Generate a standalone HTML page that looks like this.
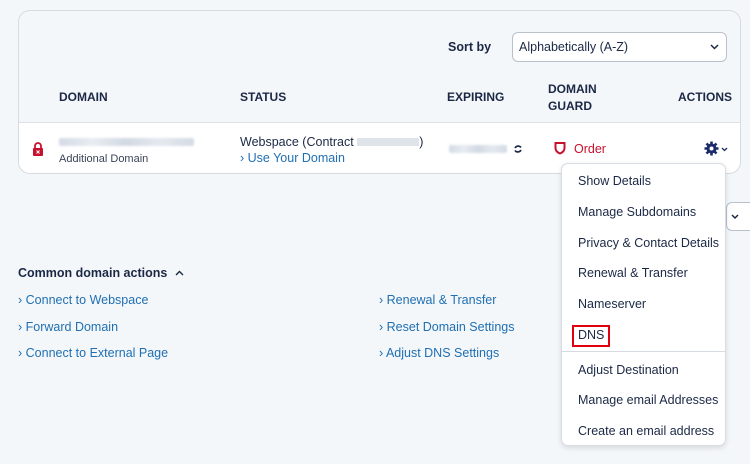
<!DOCTYPE html>
<html><head><style>
*{margin:0;padding:0;box-sizing:border-box}
body{width:750px;height:464px;background:#f4f7fa;font-family:"Liberation Sans",sans-serif;color:#1b2845;font-size:12.5px;position:relative;overflow:hidden}
.a{position:absolute;white-space:nowrap}
.card{position:absolute;left:18px;top:10px;width:723px;height:164px;border:1px solid #d6dbe2;border-radius:12px;background:#f4f7fa;overflow:hidden}
.row{position:absolute;left:0;top:111px;width:723px;height:53px;background:#fff;border-top:1px solid #dde2e8}
.h{font-weight:bold;font-size:12px}
.blue{color:#1f6fb2}
.blur{background:linear-gradient(90deg,#c9d2de,#e3e8ef,#c7d0dc,#dfe4ec,#c9d2de);height:8px;border-radius:2px;opacity:.8;filter:blur(1px)}
.menu{position:absolute;left:561px;top:163px;width:165px;height:283px;background:#fff;border:1px solid #d8dde4;border-radius:7px;box-shadow:0 2px 6px rgba(0,0,0,.12)}
.mi{position:absolute;left:16px;font-size:12.5px}
</style></head><body>
<div class="card">
  <div class="a" style="left:429px;top:29px;font-weight:bold;font-size:12.5px">Sort by</div>
  <div class="a" style="left:493px;top:21px;width:215px;height:30px;border:1px solid #b9c1cc;border-radius:6px;background:#fff;padding:7px 6px;font-size:12.5px">Alphabetically (A-Z)
    <svg style="position:absolute;right:7px;top:11px" width="9" height="6" viewBox="0 0 9 6"><path d="M1 1l3.5 3.5L8 1" stroke="#1b2845" stroke-width="1.5" fill="none"/></svg></div>
  <div class="a h" style="left:40px;top:79px">DOMAIN</div>
  <div class="a h" style="left:221px;top:79px">STATUS</div>
  <div class="a h" style="left:428px;top:79px">EXPIRING</div>
  <div class="a h" style="left:529px;top:70px;line-height:17px">DOMAIN<br>GUARD</div>
  <div class="a h" style="left:659px;top:79px">ACTIONS</div>
  <div class="row">
    <svg class="a" style="left:13px;top:19px" width="12" height="14" viewBox="0 0 12 14"><path d="M3 6V4a3 3 0 016 0v2" stroke="#c8102e" stroke-width="1.8" fill="none"/><rect x="1" y="6" width="10" height="8" rx="1" fill="#c8102e"/><path d="M4.5 8.5l3 3M7.5 8.5l-3 3" stroke="#fff" stroke-width="1"/></svg>
    <div class="a blur" style="left:40px;top:15px;width:135px"></div>
    <div class="a" style="left:40px;top:30px;font-size:11px;color:#3a4457">Additional Domain</div>
    <div class="a" style="left:221px;top:12px">Webspace (Contract <span style="display:inline-block;width:62px;height:8px;background:#dfe4eb"></span>)</div>
    <div class="a blue" style="left:221px;top:28px">› Use Your Domain</div>
    <div class="a blur" style="left:430px;top:22px;width:58px"></div>
    <svg class="a" style="left:494px;top:21px" width="10" height="10" viewBox="0 0 10 10"><path d="M8 3.5A3.5 3.5 0 002 4M2 6.5A3.5 3.5 0 008 6" stroke="#1b2845" stroke-width="1.6" fill="none"/></svg>
    <svg class="a" style="left:535px;top:18px" width="12" height="14" viewBox="0 0 12 14"><path d="M1.5 2h9v5c0 3-2 4.5-4.5 5.5C3.5 11.5 1.5 10 1.5 7z" stroke="#c8102e" stroke-width="2" fill="none"/></svg>
    <div class="a" style="left:555px;top:19px;color:#c8102e">Order</div>
    <svg class="a" style="left:685px;top:18px" width="15" height="15" viewBox="0 0 15 15"><circle cx="7.5" cy="7.5" r="5" fill="#1b2a6b"/><g stroke="#1b2a6b" stroke-width="2.6"><path d="M7.5 0.5v14M0.5 7.5h14M2.5 2.5l10 10M12.5 2.5l-10 10"/></g><circle cx="7.5" cy="7.5" r="2" fill="#fff"/></svg>
    <svg class="a" style="left:702px;top:24px" width="7" height="5" viewBox="0 0 7 5"><path d="M1 1l2.5 2.5L6 1" stroke="#1b2a6b" stroke-width="1.3" fill="none"/></svg>
  </div>
</div>
<div class="a" style="left:726px;top:202px;width:30px;height:29px;border:1px solid #b9c1cc;border-radius:6px;background:#fff"><svg style="position:absolute;left:4px;top:11px" width="8" height="6" viewBox="0 0 8 6"><path d="M1 1l3 3 3-3" stroke="#1b2845" stroke-width="1.5" fill="none"/></svg></div>
<div class="a" style="left:18px;top:266px;font-weight:bold;font-size:12.5px">Common domain actions <svg style="margin-left:4px;vertical-align:1px" width="9" height="6" viewBox="0 0 9 6"><path d="M1 5l3.5-3.5L8 5" stroke="#1b2845" stroke-width="1.4" fill="none"/></svg></div>
<div class="a blue" style="left:18px;top:293px">› Connect to Webspace</div>
<div class="a blue" style="left:18px;top:320px">› Forward Domain</div>
<div class="a blue" style="left:18px;top:346px">› Connect to External Page</div>
<div class="a blue" style="left:379px;top:293px">› Renewal &amp; Transfer</div>
<div class="a blue" style="left:379px;top:320px">› Reset Domain Settings</div>
<div class="a blue" style="left:379px;top:346px">› Adjust DNS Settings</div>
<div class="menu">
  <div class="mi" style="top:10px">Show Details</div>
  <div class="mi" style="top:41px">Manage Subdomains</div>
  <div class="mi" style="top:72px">Privacy &amp; Contact Details</div>
  <div class="mi" style="top:102px">Renewal &amp; Transfer</div>
  <div class="mi" style="top:133px">Nameserver</div>
  <div class="a" style="left:10px;top:161px;width:38px;height:22px;border:2px solid #e0000f"></div>
  <div class="mi" style="top:164px">DNS</div>
  <div class="a" style="left:0;top:187px;width:163px;height:1px;background:#d6dbe2"></div>
  <div class="mi" style="top:199px">Adjust Destination</div>
  <div class="mi" style="top:229px">Manage email Addresses</div>
  <div class="mi" style="top:260px">Create an email address</div>
</div>
</body></html>
